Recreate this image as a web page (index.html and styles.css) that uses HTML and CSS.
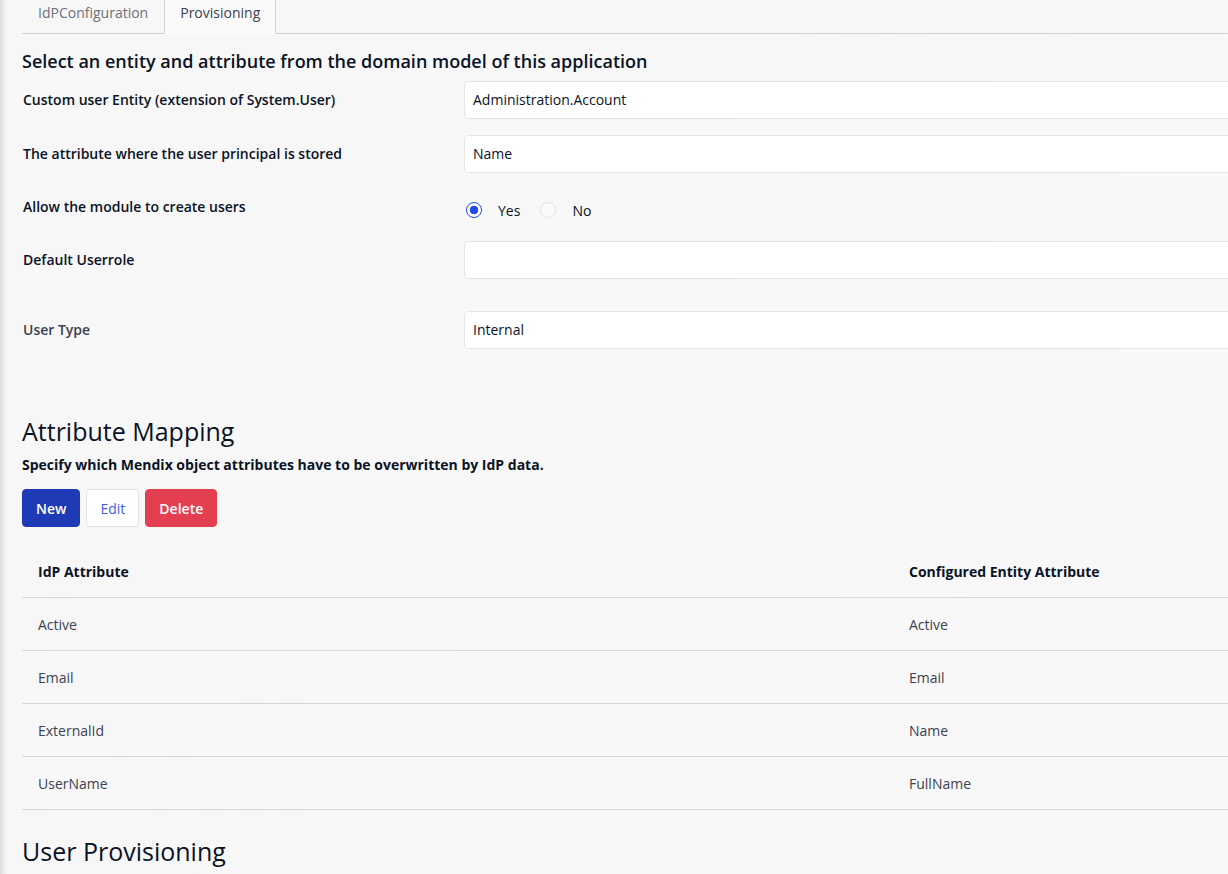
FILE: index.html
```html
<!DOCTYPE html>
<html lang="en">
<head>
<meta charset="utf-8">
<title>Provisioning</title>
<link rel="stylesheet" href="styles.css">
</head>
<body>
<div class="page">
  <div class="tabs">
    <div class="tab">IdPConfiguration</div>
    <div class="tab active">Provisioning</div>
  </div>

  <h2 class="section-title">Select an entity and attribute from the domain model of this application</h2>

  <div class="form">
    <div class="form-group">
      <label class="control-label">Custom user Entity (extension of System.User)</label>
      <div class="input">Administration.Account</div>
    </div>
    <div class="form-group">
      <label class="control-label">The attribute where the user principal is stored</label>
      <div class="input">Name</div>
    </div>
    <div class="form-group radio-group">
      <label class="control-label">Allow the module to create users</label>
      <div class="radios">
        <span class="radio checked"></span><span class="radio-label">Yes</span>
        <span class="radio"></span><span class="radio-label">No</span>
      </div>
    </div>
    <div class="form-group spaced">
      <label class="control-label">Default Userrole</label>
      <div class="input"></div>
    </div>
    <div class="form-group">
      <label class="control-label light">User Type</label>
      <div class="input">Internal</div>
    </div>
  </div>

  <h1 class="big-title mapping">Attribute Mapping</h1>
  <p class="hint">Specify which Mendix object attributes have to be overwritten by IdP data.</p>
  <div class="buttons">
    <button class="btn btn-primary">New</button>
    <button class="btn btn-default">Edit</button>
    <button class="btn btn-danger">Delete</button>
  </div>

  <table class="grid">
    <thead>
      <tr><th>IdP Attribute</th><th>Configured Entity Attribute</th></tr>
    </thead>
    <tbody>
      <tr><td>Active</td><td>Active</td></tr>
      <tr><td>Email</td><td>Email</td></tr>
      <tr><td>ExternalId</td><td>Name</td></tr>
      <tr><td>UserName</td><td>FullName</td></tr>
    </tbody>
  </table>

  <h1 class="big-title provisioning">User Provisioning</h1>
</div>
</body>
</html>
```

FILE: styles.css
```css
html, body {
  margin: 0;
  padding: 0;
  overflow: hidden;
}
body {
  background: linear-gradient(to right, #dcdcdc 0, #ececec 3px, #f7f7f7 7px, #f8f8f8 100%);
  font-family: "Open Sans", "Noto Sans", sans-serif;
  color: #0a1326;
  font-size: 14px;
}
.page {
  width: 1750px;
  padding-left: 22px;
}
.tabs {
  display: flex;
  margin-top: -7px;
  border-bottom: 1px solid #cfcfcf;
}
.tab {
  padding: 10px 16px;
  line-height: 20px;
  font-size: 14px;
  color: #6c717c;
  margin-bottom: -1px;
}
.tab.active {
  padding: 10px 15px;
  color: #3b4251;
  background: #fafafa;
  border-left: 1px solid #d6d6d6;
  border-right: 1px solid #d6d6d6;
  border-bottom: 1px solid #fafafa;
}
.section-title {
  margin: 15px 0 8px;
  font-size: 18px;
  line-height: 24px;
  font-weight: 600;
  color: #0a1326;
}
.form {
  width: 1750px;
}
.form-group {
  display: grid;
  grid-template-columns: 442px 1fr;
  align-items: center;
  min-height: 38px;
  margin-bottom: 16px;
}
.form-group.spaced {
  margin-bottom: 32px;
}
.control-label {
  padding-left: 1px;
  font-weight: 600;
  font-size: 14px;
  line-height: 20px;
  color: #0a1326;
}
.control-label.light {
  color: #3b4251;
}
.input {
  box-sizing: border-box;
  height: 38px;
  background: #fff;
  border: 1px solid #e5e5e5;
  border-radius: 4px;
  padding: 0 8px;
  line-height: 36px;
  font-size: 14px;
  color: #0a1326;
}
.radio-group {
  min-height: 36px;
}
.radios {
  display: flex;
  align-items: center;
  padding-top: 6px;
  padding-left: 2px;
}
.radio {
  box-sizing: border-box;
  width: 16px;
  height: 16px;
  border-radius: 50%;
  border: 1px solid #e3e3e3;
  background: #fafafa;
  margin-right: 16px;
}
.radio.checked {
  border: 1.5px solid #264ae5;
  background: radial-gradient(circle, #264ae5 0, #264ae5 4px, #fff 4.6px);
}
.radio-label {
  color: #0a1326;
  margin-right: 20px;
  font-size: 14px;
}
.big-title {
  font-size: 25px;
  font-weight: 400;
  line-height: 32px;
  margin: 0;
  color: #0a1326;
}
.big-title.mapping {
  margin-top: 66px;
}
.hint {
  margin: 8px 0 14px;
  font-size: 14px;
  font-weight: 700;
  color: #0a1326;
  line-height: 20px;
}
.buttons {
  display: flex;
  gap: 6px;
}
.btn {
  box-sizing: border-box;
  height: 38px;
  border-radius: 4px;
  padding: 0 13px;
  font-family: "Open Sans", "Noto Sans", sans-serif;
  font-size: 14px;
  border: 1px solid transparent;
}
.btn-primary {
  background: #1f3ab5;
  border-color: #1f3ab5;
  color: #fff;
  font-weight: 600;
}
.btn-default {
  background: #fff;
  border-color: #e3e3e3;
  color: #3d5ce6;
}
.btn-danger {
  background: #e43f51;
  border-color: #e43f51;
  color: #fff;
  font-weight: 600;
}
.grid {
  width: 1742px;
  border-collapse: collapse;
  margin-top: 18px;
  table-layout: fixed;
}
.grid th, .grid td {
  text-align: left;
  padding: 0 16px;
  height: 52px;
  border-bottom: 1px solid #d6d6d6;
  font-size: 14px;
}
.grid th {
  font-weight: 700;
  color: #0a1326;
}
.grid td {
  color: #3b4251;
}
.big-title.provisioning {
  margin-top: 25px;
}
```
